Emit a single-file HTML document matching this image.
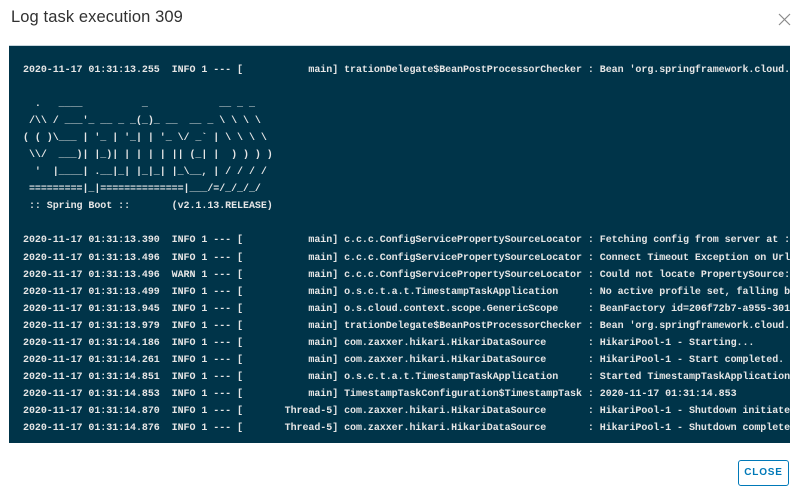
<!DOCTYPE html>
<html><head><meta charset="utf-8"><style>
html,body{margin:0;padding:0;background:#fff;width:800px;height:495px;overflow:hidden}
.title{position:absolute;left:11px;top:8px;font:16.5px "Liberation Sans",sans-serif;color:#313131;letter-spacing:0.1px}
.x{position:absolute;left:778px;top:13px}
.panel{position:absolute;left:9px;top:45px;width:781px;height:398px;background:#003449;border-top:1px solid #c8d6dd;box-sizing:border-box;overflow:hidden}
pre{margin:0;position:absolute;left:14px;top:16px;font:bold 10px/17.05px "Liberation Mono",monospace;letter-spacing:-0.055px;color:#e6e6e6;white-space:pre}
.btn{position:absolute;left:738px;top:460px;width:51px;height:26px;border:1px solid #0079b8;border-radius:3px;box-sizing:border-box;color:#0079b8;font:bold 10px/24px "Liberation Sans",sans-serif;text-align:center;letter-spacing:0.8px}
</style></head><body>
<div class="title">Log task execution 309</div>
<svg class="x" width="13" height="13" viewBox="0 0 13 13"><path d="M1 1L12 12M12 1L1 12" stroke="#8a8a8a" stroke-width="1.2"/></svg>
<div class="panel"><pre>2020-11-17 01:31:13.255  INFO 1 --- [           main] trationDelegate$BeanPostProcessorChecker : Bean 'org.springframework.cloud.

  .   ____          _            __ _ _
 /\\ / ___'_ __ _ _(_)_ __  __ _ \ \ \ \
( ( )\___ | '_ | '_| | '_ \/ _` | \ \ \ \
 \\/  ___)| |_)| | | | | || (_| |  ) ) ) )
  '  |____| .__|_| |_|_| |_\__, | / / / /
 =========|_|==============|___/=/_/_/_/
 :: Spring Boot ::       (v2.1.13.RELEASE)

2020-11-17 01:31:13.390  INFO 1 --- [           main] c.c.c.ConfigServicePropertySourceLocator : Fetching config from server at :
2020-11-17 01:31:13.496  INFO 1 --- [           main] c.c.c.ConfigServicePropertySourceLocator : Connect Timeout Exception on Url
2020-11-17 01:31:13.496  WARN 1 --- [           main] c.c.c.ConfigServicePropertySourceLocator : Could not locate PropertySource:
2020-11-17 01:31:13.499  INFO 1 --- [           main] o.s.c.t.a.t.TimestampTaskApplication     : No active profile set, falling b
2020-11-17 01:31:13.945  INFO 1 --- [           main] o.s.cloud.context.scope.GenericScope     : BeanFactory id=206f72b7-a955-301
2020-11-17 01:31:13.979  INFO 1 --- [           main] trationDelegate$BeanPostProcessorChecker : Bean 'org.springframework.cloud.
2020-11-17 01:31:14.186  INFO 1 --- [           main] com.zaxxer.hikari.HikariDataSource       : HikariPool-1 - Starting...
2020-11-17 01:31:14.261  INFO 1 --- [           main] com.zaxxer.hikari.HikariDataSource       : HikariPool-1 - Start completed.
2020-11-17 01:31:14.851  INFO 1 --- [           main] o.s.c.t.a.t.TimestampTaskApplication     : Started TimestampTaskApplication
2020-11-17 01:31:14.853  INFO 1 --- [           main] TimestampTaskConfiguration$TimestampTask : 2020-11-17 01:31:14.853
2020-11-17 01:31:14.870  INFO 1 --- [       Thread-5] com.zaxxer.hikari.HikariDataSource       : HikariPool-1 - Shutdown initiate
2020-11-17 01:31:14.876  INFO 1 --- [       Thread-5] com.zaxxer.hikari.HikariDataSource       : HikariPool-1 - Shutdown complete</pre></div>
<div class="btn">CLOSE</div>
</body></html>
